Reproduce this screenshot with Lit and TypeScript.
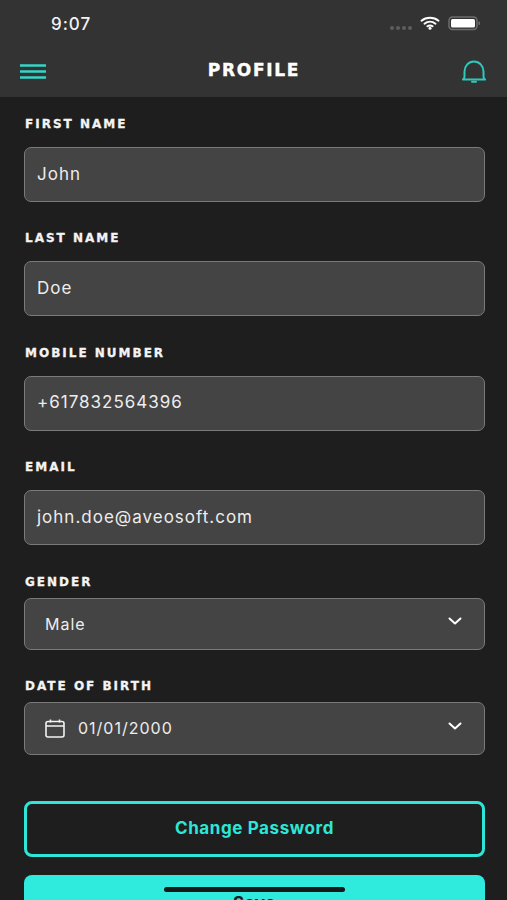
import { LitElement, css, html } from 'lit'
import { customElement } from 'lit/decorators.js'

const chevron = html`<svg class="chevron" viewBox="0 0 14 9" width="14" height="9"><path d="M1.500 1.500 7 6.500l5.500-5" fill="none" stroke="#fff" stroke-width="2" stroke-linecap="round" stroke-linejoin="round"/></svg>`

@customElement('app-root')
export class AppRoot extends LitElement {
  static get styles() {
    return css`
      :host {
        display: block;
        position: relative;
        width: 507px;
        height: 900px;
        overflow: hidden;
        background: #1e1e1e;
        font-family: Inter, 'Noto Sans', sans-serif;
      }
      .top {
        height: 97px;
        box-sizing: border-box;
        background: #333333;
        display: flex;
        flex-direction: column;
      }
      .status {
        height: 47px;
        display: flex;
        align-items: center;
        padding: 0 26px 0 51px;
        color: #f2f2f2;
        font-size: 17px;
        font-weight: 500;
        letter-spacing: 1px;
      }
      .time {
        flex: 1;
      }
      .dots {
        display: flex;
        gap: 2px;
        margin-right: 8px;
        margin-top: 8px;
      }
      .dots i {
        width: 4px;
        height: 4px;
        border-radius: 50%;
        background: #5e5e5e;
      }
      .nav {
        height: 46px;
        display: flex;
        align-items: center;
        justify-content: space-between;
        padding: 0 21px 0 20px;
      }
      .nav svg {
        margin-top: 2px;
      }
      .title {
        color: #fff;
        font-family: 'DejaVu Sans', sans-serif;
        font-weight: 700;
        font-size: 17px;
        letter-spacing: 1.7px;
        -webkit-text-stroke: 0.4px #fff;
      }
      .form {
        padding: 20px 22px 0 24px;
        display: flex;
        flex-direction: column;
      }
      .label {
        color: #f4f4f4;
        font-family: 'DejaVu Sans', sans-serif;
        font-weight: 700;
        font-size: 12px;
        line-height: 14px;
        letter-spacing: 2px;
        margin-bottom: 16px;
        padding-left: 1px;
        -webkit-text-stroke: 0.3px #f4f4f4;
      }
      .label.tight {
        margin-bottom: 9px;
      }
      .box {
        box-sizing: border-box;
        height: 55px;
        margin-bottom: 29.400px;
        background: #444444;
        border: 1.500px solid #7a7a7a;
        border-radius: 7px;
        display: flex;
        align-items: center;
        padding: 0 12px 2px;
        color: #ededed;
        font-size: 17px;
        letter-spacing: 1px;
      }
      .box.select {
        height: 53px;
        margin-bottom: 29px;
        padding: 0 22px 0 20px;
        font-size: 16px;
      }
      .box.select.short {
        height: 52px;
      }
      .box.select span {
        flex: 1;
      }
      .box.select .chevron {
        margin-top: -4px;
      }
      .box .cal {
        margin-right: 13px;
      }
      .actions {
        margin-top: 17px;
        display: flex;
        flex-direction: column;
        gap: 18px;
      }
      .btn {
        box-sizing: border-box;
        height: 56px;
        flex: none;
        border-radius: 8px;
        display: flex;
        align-items: center;
        justify-content: center;
        font-size: 17px;
        font-weight: 700;
        letter-spacing: 0.6px;
      }
      .outline {
        border: 3px solid #2ee6d8;
        color: #2ee6d8;
        padding-bottom: 2px;
      }
      .solid {
        background: #2eebdd;
        color: #1e1e1e;
      }
      .home {
        position: absolute;
        left: 164px;
        top: 887px;
        width: 181px;
        height: 5px;
        border-radius: 3px;
        background: #16191a;
      }
    `
  }

  private field(label: string, value: string) {
    return html`
      <div class="label">${label}</div>
      <div class="box">${value}</div>
    `
  }

  render() {
    return html`
      <div class="top">
        <div class="status">
          <div class="time">9:07</div>
          <div class="dots"><i></i><i></i><i></i><i></i></div>
          <svg viewBox="0 0 20 14" width="20" height="14" style="margin-top:-2px">
            <path d="M1.500 4.700C6.200 0.800 13.800 0.800 18.500 4.700M4.500 7.700c3.200-2.500 7.800-2.500 11 0M7.400 10.300c1.600-1.100 3.600-1.100 5.200 0" fill="none" stroke="#fff" stroke-width="2" stroke-linecap="round"/>
            <circle cx="10" cy="12.300" r="1.500" fill="#fff"/>
          </svg>
          <svg viewBox="0 0 33 15" width="33" height="15" style="margin-left:8px">
            <rect x="1" y="1" width="28" height="12.500" rx="3.500" fill="none" stroke="#6e6e6e" stroke-width="1.500"/>
            <rect x="3" y="3" width="24" height="8.500" rx="1.500" fill="#fff"/>
            <rect x="30.500" y="5.500" width="1.500" height="3.500" rx="0.700" fill="#6e6e6e"/>
          </svg>
        </div>
        <div class="nav">
          <svg viewBox="0 0 26 15" width="26" height="15">
            <path d="M0 1.500h26M0 7.500h26M0 13.500h26" stroke="#35d6c8" stroke-width="2.500"/>
          </svg>
          <div class="title">PROFILE</div>
          <svg viewBox="0 0 24 23" width="24" height="23">
            <path d="M2.500 16.500V11.500a9.500 10 0 0 1 19 0v5c0 1.500 0.500 2.500 1.500 3H1c1-0.500 1.500-1.500 1.500-3Z" fill="none" stroke="#2cc9bc" stroke-width="2" stroke-linejoin="round"/>
            <path d="M10 21.800h4" stroke="#2cc9bc" stroke-width="2" stroke-linecap="round"/>
          </svg>
        </div>
      </div>
      <div class="form">
        ${this.field('FIRST NAME', 'John')}
        ${this.field('LAST NAME', 'Doe')}
        ${this.field('MOBILE NUMBER', '+617832564396')}
        ${this.field('EMAIL', 'john.doe@aveosoft.com')}
        <div class="label tight">GENDER</div>
        <div class="box select short"><span>Male</span>${chevron}</div>
        <div class="label tight">DATE OF BIRTH</div>
        <div class="box select">
          <svg class="cal" viewBox="0 0 20 19" width="20" height="19">
            <rect x="1" y="2.500" width="18" height="15.500" rx="2" fill="none" stroke="#f2f2f2" stroke-width="1.600"/>
            <path d="M1 7h18M5.500 0.500v3M14.500 0.500v3" stroke="#f2f2f2" stroke-width="1.600"/>
          </svg>
          <span>01/01/2000</span>${chevron}
        </div>
        <div class="actions">
          <div class="btn outline">Change Password</div>
          <div class="btn solid">Save</div>
        </div>
      </div>
      <div class="home"></div>
    `
  }
}
